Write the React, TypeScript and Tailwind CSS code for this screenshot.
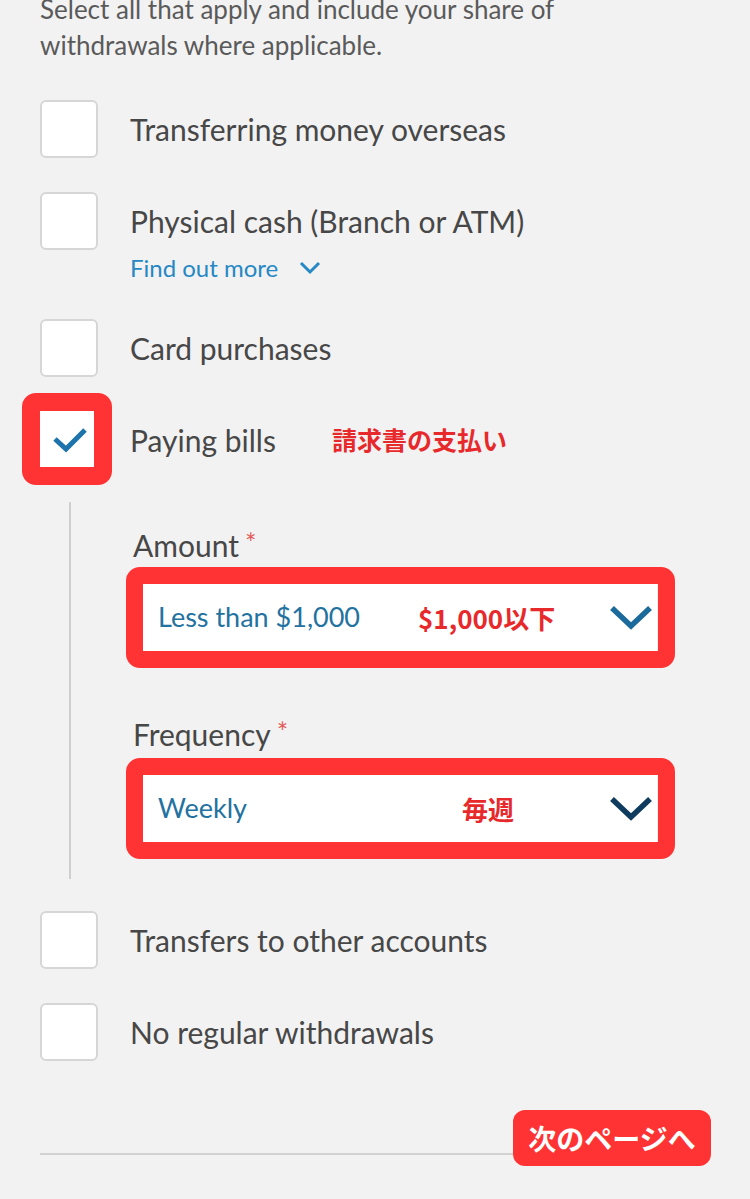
const font = { fontFamily: "Lato, 'Noto Sans', sans-serif" };
const jp = { fontFamily: "'Noto Sans CJK JP', sans-serif" };

const Box = () => (
  <div className="w-[58px] h-[58px] shrink-0 rounded-[6px] bg-white border-2 border-[#d6d6d6]" />
);

const Row = ({ label }: { label: string }) => (
  <div className="flex items-center h-[58px]">
    <Box />
    <span className="ml-[32px] text-[30px] text-[#474747]">{label}</span>
  </div>
);

const Chevron = ({ color }: { color: string }) => (
  <svg width="44" height="26" viewBox="0 0 44 26" className="ml-auto mr-[4px]">
    <polyline points="3,3 22,21 41,3" fill="none" stroke={color} strokeWidth="5.5" strokeLinejoin="miter" />
  </svg>
);

const Select = ({ value, note, valueW, chevron }: { value: string; note: string; valueW: string; chevron: string }) => (
  <div className="relative ml-[10px] w-[514px] h-[67px] bg-white flex items-center pl-[15px]">
    <span className={`${valueW} text-[27px] text-[#23729f]`}>{value}</span>
    <span className="text-[26px] font-bold text-[#e8292c]" style={jp}>{note}</span>
    <Chevron color={chevron} />
    <div className="absolute left-[-17px] top-[-17px] right-[-18px] bottom-[-17px] border-[17px] border-[#ff3333] rounded-[14px]" />
  </div>
);

const FieldLabel = ({ text, className }: { text: string; className: string }) => (
  <div className={`h-[36px] flex items-center text-[30px] text-[#474747] ${className}`}>
    {text}
    <span className="ml-[6px] self-start mt-[-4px] text-[27px] text-[#e35b5b]">*</span>
  </div>
);

export default function App() {
  return (
    <div className="min-h-screen bg-[#f2f2f2] overflow-hidden" style={font}>
      <div className="px-[40px]">
        <p className="mt-[-9px] text-[26px] leading-[36px] text-[#5a5a5a]">
          Select all that apply and include your share of
          <br />
          withdrawals where applicable.
        </p>

        <div className="mt-[37px]">
          <Row label="Transferring money overseas" />
        </div>
        <div className="mt-[34px]">
          <Row label="Physical cash (Branch or ATM)" />
          <div className="ml-[90px] mt-[4px] flex items-center h-[28px] text-[24px] text-[#2688c4]">
            Find out more
            <svg width="22" height="14" viewBox="0 0 22 14" className="ml-[21px]">
              <polyline points="2,2 11,11 20,2" fill="none" stroke="#2688c4" strokeWidth="3" />
            </svg>
          </div>
        </div>
        <div className="mt-[37px]">
          <Row label="Card purchases" />
        </div>

        <div className="mt-[34px] flex items-center h-[58px]">
          <div className="relative w-[58px] h-[58px] shrink-0 bg-white">
            <svg width="58" height="58" viewBox="0 0 58 58">
              <polyline points="15,28 26,38 45,19" fill="none" stroke="#1d74ad" strokeWidth="5" />
            </svg>
            <div className="absolute left-[-18px] top-[-18px] w-[90px] h-[92px] border-[18px] border-[#ff3333] rounded-[14px]" />
          </div>
          <span className="ml-[32px] text-[30px] text-[#474747]">Paying bills</span>
          <span className="ml-[56px] text-[25px] font-bold text-[#e8292c]" style={jp}>請求書の支払い</span>
        </div>

        <div className="mt-[33px] ml-[29px] border-l-2 border-[#cfcfcf] pl-[62px] pt-[25px] pb-[37px]">
          <FieldLabel text="Amount" className="" />
          <div className="mt-[21px]">
            <Select value="Less than $1,000" note="$1,000以下" valueW="w-[260px]" chevron="#1b6a9c" />
          </div>
          <FieldLabel text="Frequency" className="mt-[65px]" />
          <div className="mt-[23px]">
            <Select value="Weekly" note="毎週" valueW="w-[304px]" chevron="#0f3b5e" />
          </div>
        </div>

        <div className="mt-[32px]">
          <Row label="Transfers to other accounts" />
        </div>
        <div className="mt-[34px]">
          <Row label="No regular withdrawals" />
        </div>

        <div className="relative mt-[92px] h-[2px] bg-[#d2d2d2] w-[670px]">
          <div
            className="absolute left-[473px] top-[-43px] w-[198px] h-[56px] rounded-[12px] bg-[#ff3333] flex items-center justify-center text-white text-[28px] font-bold"
            style={jp}
          >
            次のページへ
          </div>
        </div>
      </div>
    </div>
  );
}
